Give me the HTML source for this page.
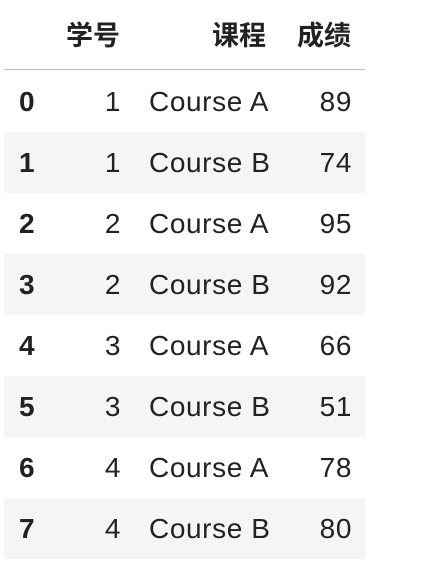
<!DOCTYPE html>
<html><head><meta charset="utf-8"><style>
body{margin:0;width:426px;height:566px;background:#fff;position:relative;overflow:hidden;font-family:"Liberation Sans","Noto Sans CJK SC",sans-serif;color:#222;font-size:27px}
.t{position:absolute;line-height:30px;white-space:nowrap}
.l{font-size:28px;letter-spacing:0.6px}
.r{text-align:right}
.b{font-weight:bold}
.row{position:absolute;left:4px;width:361px;height:61px}
</style></head><body>
<div class="t b r" style="right:306px;top:21px">学号</div>
<div class="t b r" style="right:160px;top:21px">课程</div>
<div class="t b r" style="right:75px;top:21px">成绩</div>
<div style="position:absolute;left:4px;top:69px;width:361px;height:1px;background:#bdbdbd"></div>
<div class="row" style="top:132px;background:#f5f5f5"></div>
<div class="row" style="top:254px;background:#f5f5f5"></div>
<div class="row" style="top:376px;background:#f5f5f5"></div>
<div class="row" style="top:498px;background:#f5f5f5"></div>
<div id="rows"></div>
<script>
var d=[[1,'A',89],[1,'B',74],[2,'A',95],[2,'B',92],[3,'A',66],[3,'B',51],[4,'A',78],[4,'B',80]],h='';
d.forEach(function(r,i){var y=71+i*61+16;
h+='<div class="t b l" style="left:19px;top:'+y+'px">'+i+'</div>'+
'<div class="t r l" style="right:305px;top:'+y+'px">'+r[0]+'</div>'+
'<div class="t l" style="left:149px;top:'+y+'px">Course '+r[1]+'</div>'+
'<div class="t r l" style="right:74px;top:'+y+'px">'+r[2]+'</div>';});
document.getElementById('rows').innerHTML=h;
</script>
</body></html>
